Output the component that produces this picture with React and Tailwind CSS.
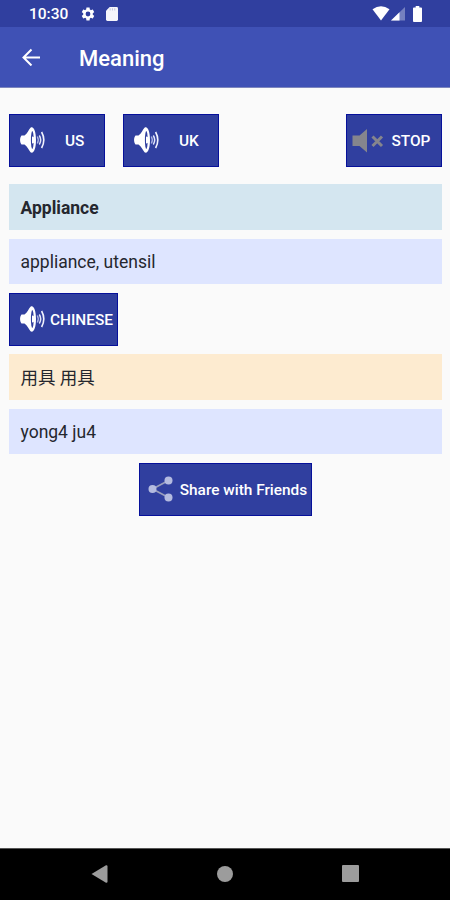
import React from "react";

function SpeakerIcon() {
  return (
    <svg width="28" height="28" viewBox="0 0 28 28" fill="none" className="shrink-0">
      <path
        d="M2.500 9.500H5.500C8.500 7.500 9.500 4 11.500 1.800C14.500 -0.200 17 5 17 14C17 23 14.500 28.200 11.500 26.200C9.500 24 8.500 20.500 5.500 18.500H2.500C0.600 16 0.600 12 2.500 9.500Z"
        fill="#fff"
      />
      <ellipse cx="13.300" cy="14" rx="1.400" ry="9" fill="#303f9f" />
      <path d="M13 10.500a3 3.500 0 0 1 0 7z" fill="#fff" />
      <path d="M18.300 10.500q2 3.500 0 7" stroke="#a9b1e2" strokeWidth="1.400" />
      <path d="M20.300 9.500q2.800 4.500 0 9" stroke="#e3e6fa" strokeWidth="1.500" />
      <path d="M22.600 6q4.400 8 0 16" stroke="#f2f3fd" strokeWidth="1.600" />
    </svg>
  );
}

function MutedIcon() {
  return (
    <svg width="34" height="28" viewBox="0 0 34 28" fill="none" className="shrink-0">
      <path d="M0.500 9.500H7.500L15 3V26.500L7.500 20H0.500Z" fill="#85858d" />
      <path d="M20.500 10.500L30 20M30 10.500L20.500 20" stroke="#85858d" strokeWidth="3" />
    </svg>
  );
}

function ShareIcon() {
  return (
    <svg width="26" height="26" viewBox="0 0 26 26" fill="none" className="shrink-0">
      <path d="M20.500 4.500L4.500 13L20.500 21.500" stroke="#9a9fbc" strokeWidth="1.700" />
      <circle cx="4.500" cy="13" r="4" fill="#b4bbe0" />
      <circle cx="20.500" cy="4.500" r="4" fill="#b4bbe0" />
      <circle cx="20.500" cy="21.500" r="4" fill="#b4bbe0" />
    </svg>
  );
}

function Button({ className, children }) {
  return (
    <button
      className={`flex h-[52.5px] items-center border border-[#06109a] bg-[#303f9f] text-[15.4px] font-medium whitespace-nowrap text-white ${className}`}
    >
      {children}
    </button>
  );
}

function Row({ className, children }) {
  return (
    <div className={`flex h-[45.6px] items-center pt-[2px] pl-[11.500px] text-[17.500px] text-[#25272e] ${className}`}>
      {children}
    </div>
  );
}

function StatusBar() {
  return (
    <div className="flex h-[27px] items-center bg-[#303f9f] pr-[28px] pl-[29px] text-white">
      <span className="w-[51px] pt-[2px] text-[15.500px] leading-none font-medium">10:30</span>
      <svg width="16" height="16" viewBox="0 0 24 24" fill="#fff">
        <path d="M19.140 12.940c.04-.3.060-.61.060-.94 0-.32-.02-.64-.07-.94l2.030-1.580c.18-.14.230-.41.120-.61l-1.920-3.320c-.12-.22-.37-.29-.59-.22l-2.390.960c-.5-.38-1.030-.7-1.620-.94L14.400 2.810c-.04-.24-.24-.41-.48-.41h-3.840c-.24 0-.43.170-.47.410L9.250 5.350c-.59.240-1.130.570-1.620.940L5.240 5.330c-.22-.08-.47 0-.59.220L2.740 8.870c-.12.210-.08.470.120.610l2.030 1.580c-.05.300-.09.630-.09.940s.02.640.070.940l-2.030 1.580c-.18.140-.23.410-.12.610l1.920 3.320c.12.220.37.290.59.220l2.390-.96c.5.380 1.030.700 1.620.940l.36 2.540c.05.240.240.410.480.410h3.840c.24 0 .44-.17.470-.41l.36-2.540c.59-.24 1.130-.56 1.620-.94l2.390.960c.22.080.470 0 .59-.22l1.920-3.320c.12-.22.070-.47-.12-.61zM12 15.600a3.600 3.600 0 1 1 0-7.200 3.600 3.600 0 0 1 0 7.200z" />
      </svg>
      <svg width="12" height="14" viewBox="0 0 13 15" className="ml-[10px]">
        <path d="M4 0H11.500Q13 0 13 1.500V13.500Q13 15 11.500 15H1.500Q0 15 0 13.500V4Z" fill="#f5f5fb" />
        <path d="M4.500 1.200v2.500M7 1.200v2.500M9.500 1.200v2.500" stroke="#c5c9e0" strokeWidth="1.100" />
      </svg>
      <svg width="18" height="15" viewBox="0 0 18 15" className="ml-auto">
        <path d="M0.500 3.200Q9-2.800 17.500 3.200L9 14.500Z" fill="#fff" />
      </svg>
      <svg width="14" height="14" viewBox="0 0 14 14" className="ml-[1px]">
        <path d="M0 13.500L14 0V13.500Z" fill="#7580bf" />
        <path d="M0 13.500L8.500 5.300V13.500Z" fill="#fff" />
      </svg>
      <svg width="9" height="16" viewBox="0 0 10 16" preserveAspectRatio="none" className="ml-[8px]">
        <path d="M3 0H7V1.500H9Q10 1.500 10 2.500V15Q10 16 9 16H1Q0 16 0 15V2.500Q0 1.500 1 1.500H3Z" fill="#fff" />
      </svg>
    </div>
  );
}

export default function App() {
  return (
    <div className="flex h-[900px] w-[450px] flex-col overflow-hidden bg-[#fafafa] font-['Roboto','Noto_Sans_CJK_SC',sans-serif]">
      <StatusBar />
      <header className="flex h-[61px] items-center border-b border-[#7d86bd] bg-[#3f51b5] pl-[21px] text-white">
        <svg width="20" height="18" viewBox="0 0 20 18" fill="none" stroke="#fff" strokeWidth="2">
          <path d="M19 9.500H2.500M10.500 1.500L2.500 9.500L10.500 17.500" />
        </svg>
        <h1 className="ml-[38px] pt-[3px] text-[22px] leading-none font-medium">Meaning</h1>
      </header>

      <main className="flex flex-1 flex-col pt-[26px] pr-[8.500px] pl-[9px]">
        <div className="flex">
          <Button className="w-24 pl-[9px]">
            <SpeakerIcon />
            <span className="ml-[18px] pt-[2px]">US</span>
          </Button>
          <Button className="ml-[18px] w-24 pl-[9px]">
            <SpeakerIcon />
            <span className="ml-[18px] pt-[2px]">UK</span>
          </Button>
          <Button className="ml-auto w-24 pl-[5px]">
            <MutedIcon />
            <span className="ml-[6px] pt-[2px]">STOP</span>
          </Button>
        </div>
        <div className="mt-[17.800px] flex flex-col gap-[8.800px]">
          <Row className="bg-[#d4e6f0] font-bold">Appliance</Row>
          <Row className="bg-[#dee5ff]">appliance, utensil</Row>
          <Button className="w-[109px] pl-[9px]">
            <SpeakerIcon />
            <span className="ml-[3px] pt-[2px]">CHINESE</span>
          </Button>
          <Row className="bg-[#fdebd0]">用具 用具</Row>
          <Row className="bg-[#dee5ff]">yong4 ju4</Row>
          <Button className="w-[173px] self-center pl-[8px]">
            <ShareIcon />
            <span className="ml-[6px] pt-[2px]">Share with Friends</span>
          </Button>
        </div>
      </main>

      <nav className="flex h-[52px] items-center justify-between border-t border-[#555] bg-black px-[91px] pb-[2px]">
        <svg width="17" height="18" viewBox="0 0 17 18">
          <path d="M0.500 9L15 0.300Q16.500 0 16.500 1.500V16.500Q16.500 18 15 17.700Z" fill="#9c9c9c" />
        </svg>
        <div className="size-4 rounded-full bg-[#9c9c9c]" />
        <div className="size-[17px] rounded-[1px] bg-[#9c9c9c]" />
      </nav>
    </div>
  );
}
